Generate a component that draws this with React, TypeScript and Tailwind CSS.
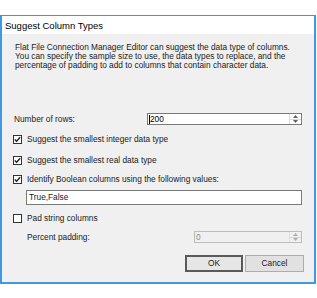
import React from "react";

const Check = ({ checked }: { checked: boolean }) => (
  <span className="w-[9px] h-[9px] border border-[#333] bg-white flex items-center justify-center shrink-0">
    {checked && (
      <svg width="7" height="7" viewBox="0 0 7 7">
        <path d="M0.8 3.4 L2.6 5.3 L6.2 1.2" fill="none" stroke="#222" strokeWidth="1.4" />
      </svg>
    )}
  </span>
);

const Spin = ({ value, disabled }: { value: string; disabled?: boolean }) => (
  <div
    className={`h-[12px] flex items-center border ${
      disabled ? "border-[#bcbcbc] bg-[#f0f0f0] text-[#8a8a8a]" : "border-[#7a7a7a] bg-white text-black"
    }`}
  >
    <div className="flex-1 flex items-center pl-[1px] leading-none">
      {!disabled && <span className="w-px h-[9px] bg-black" />}
      <span>{value}</span>
    </div>
    <div className="w-[12px] h-full flex flex-col border-l border-[#e0e0e0]">
      <div className="flex-1 flex items-center justify-center border-b border-[#d8d8d8]">
        <svg width="5" height="3" viewBox="0 0 5 3">
          <path d="M0 3 L2.5 0 L5 3 Z" fill={disabled ? "#b0b0b0" : "#606060"} />
        </svg>
      </div>
      <div className="flex-1 flex items-center justify-center">
        <svg width="5" height="3" viewBox="0 0 5 3">
          <path d="M0 0 L2.5 3 L5 0 Z" fill={disabled ? "#b0b0b0" : "#606060"} />
        </svg>
      </div>
    </div>
  </div>
);

export default function App() {
  return (
    <div
      className="w-[317px] h-[298px] bg-white pt-[15px] text-[8.3px] leading-[9px] text-[#1a1a1a]"
      style={{ fontFamily: '"Liberation Sans", Arial, sans-serif' }}
    >
      <div className="w-[316px] h-[269px] border-2 border-t border-[#3d9ae2] flex flex-col">
        {/* title bar */}
        <div className="h-[18px] bg-white pl-[3px] flex items-center text-[9.5px] text-black">
          Suggest Column Types
        </div>

        {/* body */}
        <div className="flex-1 bg-[#f0f0f0] pl-[11px] pr-[12px] pt-[9px] flex flex-col">
          <p className="pl-[2px]">
            Flat File Connection Manager Editor can suggest the data type of columns.
            <br />
            You can specify the sample size to use, the data types to replace, and the
            <br />
            percentage of padding to add to columns that contain character data.
          </p>

          <div className="mt-[43px] flex items-center">
            <span className="pl-[1px] w-[134px]">Number of rows:</span>
            <div className="flex-1">
              <Spin value="200" />
            </div>
          </div>

          <div className="mt-[10px] flex items-center gap-[5px]">
            <Check checked />
            <span>Suggest the smallest integer data type</span>
          </div>
          <div className="mt-[12px] flex items-center gap-[5px]">
            <Check checked />
            <span>Suggest the smallest real data type</span>
          </div>
          <div className="mt-[10px] flex items-center gap-[5px]">
            <Check checked />
            <span>Identify Boolean columns using the following values:</span>
          </div>

          <div className="mt-[6px] ml-[13px] h-[15px] border border-[#7a7a7a] bg-white flex items-center pl-[2px]">
            True,False
          </div>

          <div className="mt-[9px] flex items-center gap-[5px]">
            <Check checked={false} />
            <span>Pad string columns</span>
          </div>

          <div className="mt-[8px] flex items-center">
            <span className="pl-[14px] w-[181px]">Percent padding:</span>
            <div className="flex-1">
              <Spin value="0" disabled />
            </div>
          </div>

          <div className="mt-[12px] flex justify-end gap-[2px] -mr-[2px]">
            <button className="w-[58px] h-[17px] border-2 border-[#5a5a5a] bg-[#e6e6e6] text-[8.3px] leading-none">
              OK
            </button>
            <button className="w-[59px] h-[17px] border border-[#adadad] bg-[#e1e1e1] text-[8.3px] leading-none">
              Cancel
            </button>
          </div>
        </div>
      </div>
    </div>
  );
}
